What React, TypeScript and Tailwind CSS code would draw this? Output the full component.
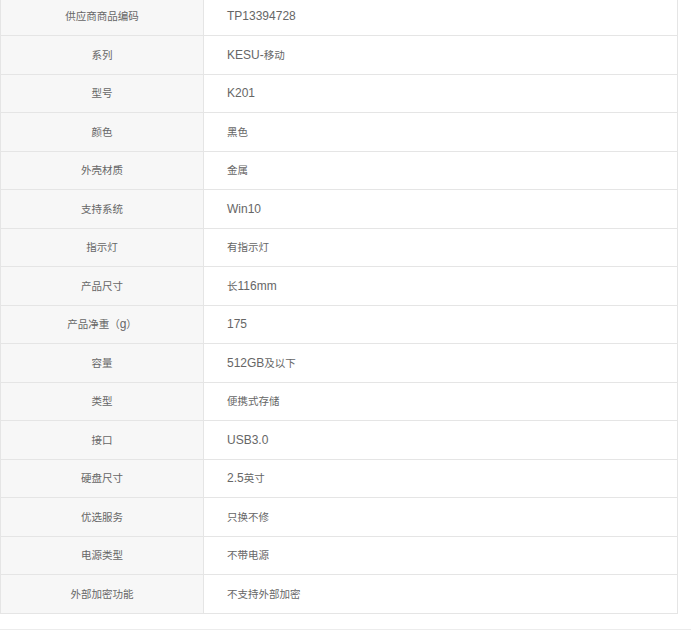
import React from "react";

const rows: [string, string][] = [
  ["供应商商品编码", "TP13394728"],
  ["系列", "KESU-移动"],
  ["型号", "K201"],
  ["颜色", "黑色"],
  ["外壳材质", "金属"],
  ["支持系统", "Win10"],
  ["指示灯", "有指示灯"],
  ["产品尺寸", "长116mm"],
  ["产品净重（g）", "175"],
  ["容量", "512GB及以下"],
  ["类型", "便携式存储"],
  ["接口", "USB3.0"],
  ["硬盘尺寸", "2.5英寸"],
  ["优选服务", "只换不修"],
  ["电源类型", "不带电源"],
  ["外部加密功能", "不支持外部加密"],
];

function Mixed({ text }: { text: string }) {
  const parts = text.match(/([\u3000-\u9fff\uff00-\uffef]+|[^\u3000-\u9fff\uff00-\uffef]+)/g) || [];
  return (
    <>
      {parts.map((p, i) =>
        /[\u3000-\u9fff\uff00-\uffef]/.test(p) ? (
          <span key={i} className="text-[10.5px]" style={{ fontFamily: '"Noto Sans CJK SC", sans-serif' }}>
            {p}
          </span>
        ) : (
          <span key={i}>{p}</span>
        )
      )}
    </>
  );
}

export default function App() {
  return (
    <div className="w-[691px] h-[631px] overflow-hidden bg-white text-[12px] text-[#666]" style={{ fontFamily: '"Liberation Sans", Arial, "Noto Sans CJK SC", sans-serif' }}>
      <div className="mt-[-2.5px] w-[678px] border-l border-r border-[#e5e5e5]">
        {rows.map(([k, v], i) => (
          <div key={i} className="flex h-[38.5px] border-b border-[#e5e5e5]">
            <div className="w-[203px] shrink-0 bg-[#f7f7f7] border-r border-[#e5e5e5] flex items-center justify-center leading-none">
              <Mixed text={k} />
            </div>
            <div className="flex-1 flex items-center pl-[23px] leading-none">
              <Mixed text={v} />
            </div>
          </div>
        ))}
      </div>
      <div className="mt-[15px] border-t border-[#ececec]" />
    </div>
  );
}
